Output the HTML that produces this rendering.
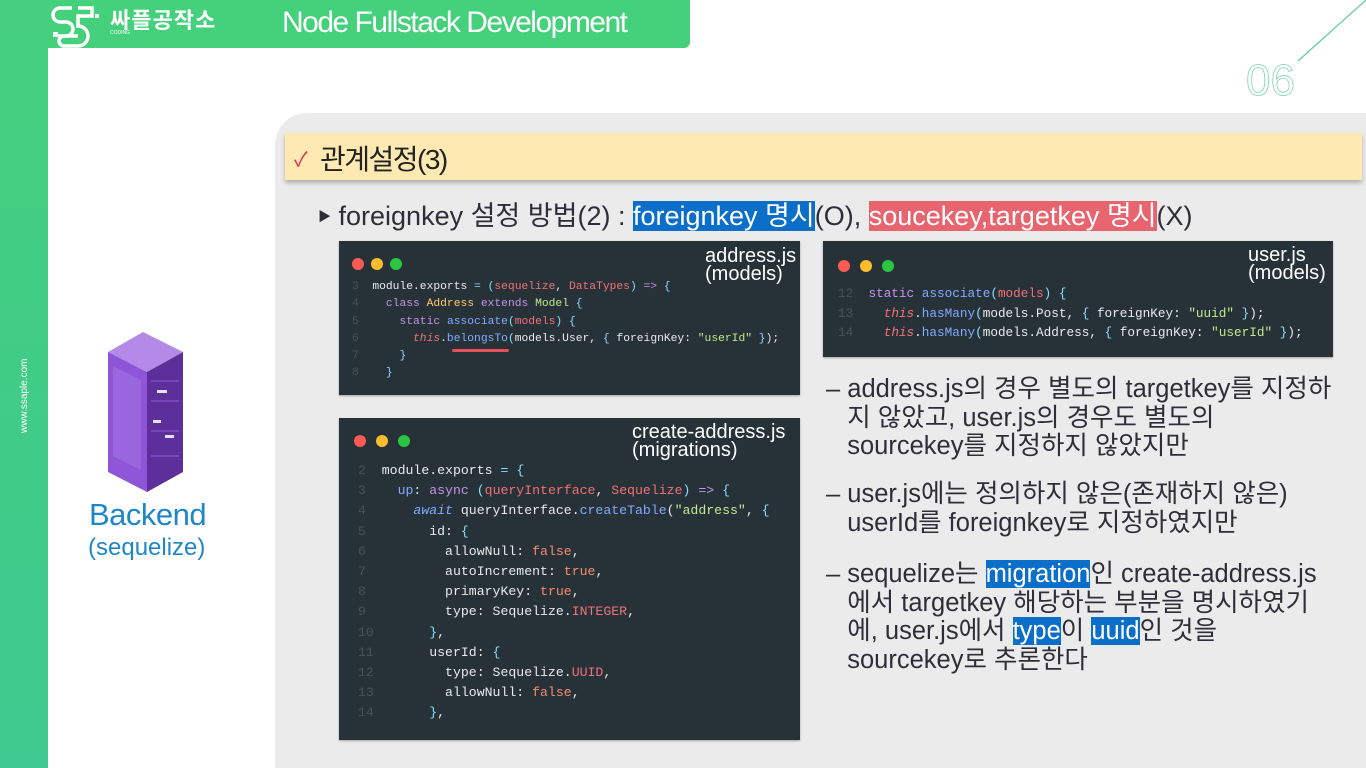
<!DOCTYPE html>
<html style="overflow:hidden"><head><meta charset="utf-8"><style>
*{margin:0;padding:0;box-sizing:border-box}
html,body{width:1366px;height:768px;overflow:hidden}
body{background:#fff;position:relative;font-family:"Liberation Sans","Noto Sans CJK KR",sans-serif}
.abs{position:absolute}
.side{left:0;top:0;width:48px;height:768px;background:linear-gradient(#45cf7e,#3dc98f)}
.hdr{left:48px;top:0;width:642px;height:48px;background:#45d07c;border-radius:0 0 6px 0}
.panel{left:275px;top:113px;width:1091px;height:655px;background:#ebebeb;border-radius:32px 0 0 0}
.ybar{left:285px;top:133px;width:1077px;height:47px;background:#fde9b1;box-shadow:0 3px 4px rgba(0,0,0,.25)}
.code{background:#273238;box-shadow:0 1px 2px rgba(0,0,0,.3);font-family:"Liberation Mono",monospace;color:#e8eaed;white-space:pre}
.dots span{position:absolute;top:0;width:12px;height:12px;border-radius:50%}
.ln{color:#46525a}
.k{color:#c792ea}.f{color:#82aaff}.p{color:#f07178}.c{color:#ffcb6b}.g{color:#c3e88d}.b{color:#89ddff}.o{color:#f78c6c}.t{color:#f07178;font-style:italic}
.lbl{color:#fff;font-family:"Liberation Sans",sans-serif;font-size:20px;line-height:18px;text-align:left;white-space:pre}
.rt{font-size:25.5px;color:#2e2e38;line-height:28.5px;letter-spacing:0}
.hl{background:#0b6fc9;color:#fff}
</style></head><body>
<div class="abs side"></div>
<div class="abs" style="left:19px;top:345px;width:12px;height:90px;"><div style="transform:rotate(-90deg);transform-origin:0 0;position:absolute;left:0;top:88px;color:#fff;font-size:10px;white-space:nowrap">www.ssaple.com</div></div>
<div class="abs hdr"></div>
<svg class="abs" style="left:50px;top:4px" width="54" height="44" viewBox="0 0 54 44"><g fill="none" stroke="#fff" stroke-width="3.5"><path d="M22 4 H10 a7 7 0 0 0 0 14 h6 a7 7 0 0 1 0 14 H8"/><path d="M28 4 h14 v8 h-14 v10 a10 10 0 0 1 0 20 h-14 a5 5 0 0 1 0-10 h14"/></g><rect x="3" y="28" width="5" height="5" fill="#fff"/><rect x="45" y="10" width="4" height="4" fill="#fff"/></svg>
<div class="abs" style="left:110px;top:3px;color:#fff;font-size:22px;font-weight:bold;letter-spacing:1px">싸플공작소</div>
<div class="abs" style="left:110px;top:30px;color:#fff;font-size:5px">CODING</div>
<div class="abs" style="left:282px;top:6px;color:#fff;font-size:30px;letter-spacing:-1.5px">Node Fullstack Development</div>
<svg class="abs" style="left:1240px;top:0" width="126" height="100"><line x1="126" y1="0" x2="58" y2="61" stroke="#5cc9a0" stroke-width="1.2"/><text x="6" y="95" font-family="Liberation Sans,sans-serif" font-size="44" fill="none" stroke="#7dd3b0" stroke-width="0.8">06</text></svg>
<div class="abs panel"></div>
<div class="abs ybar"></div>
<div class="abs" style="left:294px;top:143px;color:#e0304f;font-size:20px">✓</div>
<div class="abs" style="left:320px;top:138px;font-size:28px;color:#222;letter-spacing:-1.5px">관계설정(3)</div>
<div class="abs" style="left:318px;top:194px;font-size:27px;color:#2e2e38;letter-spacing:0;white-space:nowrap"><span style="font-size:13px;vertical-align:4px">▶</span> foreignkey 설정 방법(2) : <span class="hl" style="background:#0b6fc9">foreignkey 명시</span>(O), <span style="background:#e8646e;color:#fff">soucekey,targetkey 명시</span>(X)</div>

<div class="abs code" style="left:339px;top:241px;width:461px;height:154px;font-size:11.3px;line-height:17.3px">
<div class="dots abs" style="left:13px;top:17px"><span style="left:0;background:#fb5a55"></span><span style="left:19px;background:#fcbc2e"></span><span style="left:38px;background:#2ac642"></span></div>
<div class="abs lbl" style="left:366px;top:6px">address.js
(models)</div>
<div class="abs" style="left:13px;top:38px"><span class="ln">3</span>  module.exports <span class="b">=</span> <span class="b">(</span><span class="p">sequelize</span>, <span class="p">DataTypes</span><span class="b">)</span> <span class="k">=&gt;</span> <span class="b">{</span>
<span class="ln">4</span>    <span class="k">class</span> <span class="c">Address</span> <span class="k">extends</span> <span class="g">Model</span> <span class="b">{</span>
<span class="ln">5</span>      <span class="k">static</span> <span class="f">associate</span><span class="b">(</span><span class="p">models</span><span class="b">)</span> <span class="b">{</span>
<span class="ln">6</span>        <span class="t">this</span>.<span class="f">belongsTo</span><span class="b">(</span>models.User, <span class="b">{</span> foreignKey: <span class="g">"userId"</span> <span class="b">}</span>);
<span class="ln">7</span>      <span class="b">}</span>
<span class="ln">8</span>    <span class="b">}</span></div>
<div class="abs" style="left:113px;top:108px;width:57px;height:3px;background:#e8505b;border-radius:2px"></div>
</div>

<div class="abs code" style="left:823px;top:241px;width:510px;height:116px;font-size:12.7px;line-height:19.5px">
<div class="dots abs" style="left:15px;top:19px"><span style="left:0;background:#fb5a55"></span><span style="left:22px;background:#fcbc2e"></span><span style="left:44px;background:#2ac642"></span></div>
<div class="abs lbl" style="left:425px;top:5px">user.js
(models)</div>
<div class="abs" style="left:15px;top:43px"><span class="ln">12</span>  <span class="k">static</span> <span class="f">associate</span><span class="b">(</span><span class="p">models</span><span class="b">)</span> <span class="b">{</span>
<span class="ln">13</span>    <span class="t">this</span>.<span class="f">hasMany</span><span class="b">(</span>models.Post, <span class="b">{</span> foreignKey: <span class="g">"uuid"</span> <span class="b">}</span>);
<span class="ln">14</span>    <span class="t">this</span>.<span class="f">hasMany</span><span class="b">(</span>models.Address, <span class="b">{</span> foreignKey: <span class="g">"userId"</span> <span class="b">}</span>);</div>
</div>

<div class="abs code" style="left:339px;top:418px;width:461px;height:322px;font-size:13.2px;line-height:20.2px">
<div class="dots abs" style="left:15px;top:17px"><span style="left:0;background:#fb5a55"></span><span style="left:22px;background:#fcbc2e"></span><span style="left:44px;background:#2ac642"></span></div>
<div class="abs lbl" style="left:293px;top:5px">create-address.js
(migrations)</div>
<div class="abs" style="left:19px;top:43px"><span class="ln">2</span>  module.exports <span class="b">=</span> <span class="b">{</span>
<span class="ln">3</span>    <span class="f">up</span>: <span class="k">async</span> <span class="b">(</span><span class="p">queryInterface</span>, <span class="p">Sequelize</span><span class="b">)</span> <span class="k">=&gt;</span> <span class="b">{</span>
<span class="ln">4</span>      <span class="f" style="font-style:italic">await</span> queryInterface.<span class="f">createTable</span>(<span class="g">"address"</span>, <span class="b">{</span>
<span class="ln">5</span>        id: <span class="b">{</span>
<span class="ln">6</span>          allowNull: <span class="o">false</span>,
<span class="ln">7</span>          autoIncrement: <span class="o">true</span>,
<span class="ln">8</span>          primaryKey: <span class="o">true</span>,
<span class="ln">9</span>          type: Sequelize.<span class="p">INTEGER</span>,
<span class="ln">10</span>       <span class="b">}</span>,
<span class="ln">11</span>       userId: <span class="b">{</span>
<span class="ln">12</span>         type: Sequelize.<span class="p">UUID</span>,
<span class="ln">13</span>         allowNull: <span class="o">false</span>,
<span class="ln">14</span>       <span class="b">}</span>,</div>
</div>

<div class="abs rt" style="left:826px;top:375px;white-space:nowrap">– address.js의 경우 별도의 targetkey를 지정하<br>&nbsp;&nbsp; 지 않았고, user.js의 경우도 별도의<br>&nbsp;&nbsp; sourcekey를 지정하지 않았지만</div>
<div class="abs rt" style="left:826px;top:480px;white-space:nowrap">– user.js에는 정의하지 않은(존재하지 않은)<br>&nbsp;&nbsp; userId를 foreignkey로 지정하였지만</div>
<div class="abs rt" style="left:826px;top:560px;white-space:nowrap">– sequelize는 <span class="hl">migration</span>인 create-address.js<br>&nbsp;&nbsp; 에서 targetkey 해당하는 부분을 명시하였기<br>&nbsp;&nbsp; 에, user.js에서 <span class="hl">type</span>이 <span class="hl">uuid</span>인 것을<br>&nbsp;&nbsp; sourcekey로 추론한다</div>

<svg class="abs" style="left:105px;top:330px" width="80" height="165" viewBox="0 0 80 165">
<polygon points="3,22 38,2 78,22 42,42" fill="#b48ae8"/>
<polygon points="3,22 42,42 42,162 3,142" fill="#8e56d6"/>
<polygon points="42,42 78,22 78,142 42,162" fill="#5d2f9a"/>
<polygon points="8,36 36,50 36,140 8,126" fill="#9a66de"/>
<g fill="#e8e0ff"><rect x="52" y="60" width="10" height="3"/><rect x="48" y="90" width="8" height="3"/><rect x="60" y="105" width="9" height="3"/></g>
<g fill="#7744bb"><rect x="46" y="50" width="28" height="2"/><rect x="46" y="70" width="28" height="2"/><rect x="46" y="100" width="28" height="2"/><rect x="46" y="125" width="28" height="2"/></g>
</svg>
<div class="abs" style="left:89px;top:497px;font-size:31px;color:#1f86c8;letter-spacing:-0.5px">Backend</div>
<div class="abs" style="left:88px;top:534px;font-size:24px;color:#1f86c8">(sequelize)</div>
</body></html>
